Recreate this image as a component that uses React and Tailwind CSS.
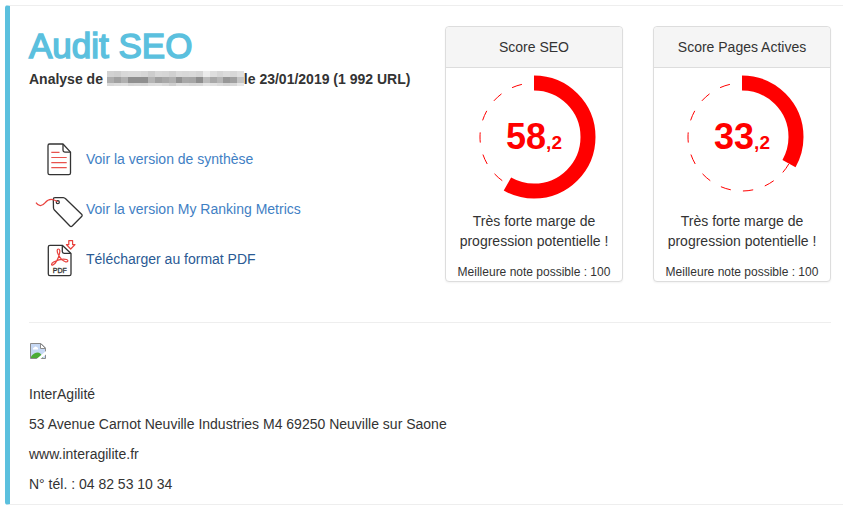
const scores = [
  { title: "Score SEO", value: 58.2 },
  { title: "Score Pages Actives", value: 33.2 },
];

const contact = [
  "InterAgilité",
  "53 Avenue Carnot Neuville Industries M4 69250 Neuville sur Saone",
  "www.interagilite.fr",
  "N° tél. : 04 82 53 10 34",
];

// grey levels of the masked site name, one array per row
const mask = [
  ["#d2d2d2", "#cfcfcf", "#d8d8d8", "#dadada", "#dadada", "#d6d6d6", "#cdcdcd", "#d8d8d8", "#d6d6d6", "#d0d0d0", "#dadada", "#d8d8d8", "#dadada", "#d6d6d6", "#ececec", "#dedede", "#d6d6d6", "#dcdcdc", "#d8d8d8", "#e0e0e0"],
  ["#aeaeae", "#a0a0a0", "#b0b0b0", "#8f8f8f", "#8f8f8f", "#8f8f8f", "#b4b4b4", "#a0a0a0", "#a8a8a8", "#b0b0b0", "#929292", "#a8a8a8", "#a6a6a6", "#8e8e8e", "#bcbcbc", "#a8a8a8", "#b6b6b6", "#979797", "#a0a0a0", "#c4c4c4"],
  ["#d8d8d8", "#dcdcdc", "#dedede", "#d4d4d4", "#d6d6d6", "#d4d4d4", "#dcdcdc", "#dedede", "#d8d8d8", "#cecece", "#dcdcdc", "#dadada", "#d6d6d6", "#d8d8d8", "#e4e4e4", "#e0e0e0", "#dadada", "#d4d4d4", "#d8d8d8", "#e6e6e6"],
];

function MaskedName() {
  return (
    <svg
      className="inline-block w-[137px] h-[15px] align-text-top"
      viewBox="0 0 140 15"
      preserveAspectRatio="none"
      shapeRendering="crispEdges"
      aria-hidden="true"
    >
      {mask.map((row, y) =>
        row.map((fill, x) => (
          <rect key={`${x}-${y}`} x={x * 7} y={y * 6} width="7" height={y === 2 ? 3 : 6} fill={fill} />
        ))
      )}
    </svg>
  );
}

function DocumentIcon() {
  return (
    <svg width="57" height="46" viewBox="0 2 57 46" fill="none" stroke="#333" strokeWidth="1.3" aria-hidden="true">
      <path d="M34 10H20.5Q19 10 19 11.7V39Q19 40.7 20.7 40.7H39.8Q41.5 40.7 41.5 39V18.1Z" strokeLinejoin="round" />
      <path d="M34 10V16.3Q34 18.1 35.8 18.1H41.5" />
      <path d="M22.3 18.3H30.5M22.3 23.5H37.7M22.3 28.7H37.7M22.3 33.6H37.7" stroke="#e8524e" strokeWidth="1.2" />
    </svg>
  );
}

function TagIcon() {
  return (
    <svg width="57" height="46" viewBox="0 2 57 46" fill="none" stroke="#333" strokeWidth="1.3" aria-hidden="true">
      <path
        d="M26 13.6L34.2 13.7Q35.6 13.8 36.6 14.8L52.6 30.3Q53.7 31.4 52.6 32.5L43.2 42Q42 43 40.9 42L25.4 26Q24.6 25.2 24.5 24L24.3 15.2Q24.3 13.6 26 13.6Z"
        strokeLinejoin="round"
      />
      <circle cx="28.8" cy="18.2" r="1.5" />
      <path d="M7 18.6C9.5 22.5 13 22.6 16 18.9C19.5 14.5 24 14.6 28.5 17.8" stroke="#e8413c" strokeWidth="1.2" />
    </svg>
  );
}

function PdfIcon() {
  return (
    <svg width="57" height="46" viewBox="0 2 57 46" fill="none" stroke="#333" strokeWidth="1.3" aria-hidden="true">
      <path d="M33.3 11.3H21Q19.3 11.3 19.3 13V40Q19.3 41.7 21 41.7H40.3Q42 41.7 42 40V19.4Z" strokeLinejoin="round" />
      <path d="M33.3 11.3V17.6Q33.3 19.4 35.1 19.4H42" />
      <g stroke="#e8413c" strokeWidth="1.2" strokeLinejoin="round">
        <path d="M39.8 6.6H43.6V10.6H46L41.7 15L37.4 10.6H39.8Z" fill="#fff" />
        <path d="M29.4 15C27.7 15 27.9 18 29.3 20.5C30.9 23.6 33.6 26.9 36.4 27.8C38.8 28.5 39.8 26.3 37.6 25.5C34.4 24.5 28.4 26 24.6 28C22 29.4 22 31.6 24 30.9C26.8 29.9 29.7 23.8 30.6 19.2C31 17 30.9 15 29.4 15Z" />
      </g>
      <text x="30.8" y="38.6" textAnchor="middle" fill="#333" stroke="#333" strokeWidth="0.3" fontSize="7">
        PDF
      </text>
    </svg>
  );
}

function BrokenImage() {
  return (
    <svg width="16" height="16" viewBox="0 0 16 16" className="block ml-px" role="img" aria-label="Logo">
      <path d="M.5 .5H11L15.5 5V15.5H.5Z" fill="#c6d8f4" />
      <path d="M3 6.5Q2.6 4.8 4.2 4.6Q5.2 2.8 7 4.2Q8.6 4.6 8 6.5Z" fill="#fff" />
      <path d="M1 15V13.5Q4 9.5 8 9.5Q11 9.8 13 15Z" fill="#4cab36" />
      <path d="M.5 15.5V.5H11L15.5 5V15.5Z" fill="none" stroke="#8b8b8b" />
      <path d="M10.5 .5V5.5H15.5Z" fill="#fff" stroke="#8b8b8b" />
      <path d="M6.5 16L16 8V11.5L10.5 16Z" fill="#fff" />
    </svg>
  );
}

function ScoreRing({ value }) {
  const [whole, decimal] = value.toFixed(1).split(".");
  return (
    <svg
      width="124"
      height="124"
      viewBox="-62 -62 124 124"
      className="block mx-auto"
      role="img"
      aria-label={`${whole},${decimal}`}
    >
      <g transform="rotate(-90)" fill="none" stroke="#f00">
        <circle r="54" pathLength="360" strokeDasharray="11 13" />
        <circle r="54" pathLength="100" strokeWidth="15" strokeDasharray={`${value} 100`} />
      </g>
      <text y="12" textAnchor="middle" fill="#f00" fontWeight="bold" fontSize="36">
        {whole}
        <tspan fontSize="19">,{decimal}</tspan>
      </text>
    </svg>
  );
}

function ScoreCard({ title, value }) {
  return (
    <section className="border border-[#ddd] rounded bg-white text-center shadow-xs">
      <h2 className="bg-[#f5f5f5] border-b border-[#ddd] rounded-t py-[10px]">{title}</h2>
      <div className="pt-[7px]">
        <ScoreRing value={value} />
        <p className="mt-3">
          Très forte marge de
          <br />
          progression potentielle !
        </p>
        <p className="mt-3 text-xs leading-[18px]">Meilleure note possible : 100</p>
      </div>
    </section>
  );
}

export default function App() {
  return (
    <div className="bg-white pt-[5px] pl-[5px] pb-[10px] text-[14px] leading-5 text-[#333] font-['Liberation_Sans',Arial,sans-serif]">
      <main className="border-y border-[#eee] border-l-[5px] border-l-[#5bc0de] rounded-l-[3px] pt-5 pr-3 pb-[10px] pl-[19px]">
        <div className="grid grid-cols-4 gap-[30px]">
          <div className="col-span-2">
            <h1 className="text-[35px] leading-10 text-[#5bc0de] [-webkit-text-stroke:1.5px]">Audit SEO</h1>
            <p className="mt-[3px] font-bold whitespace-nowrap">
              Analyse de <MaskedName />
              le 23/01/2019 (1 992 URL)
            </p>
            <nav className="mt-[47px] flex flex-col items-start gap-1">
              <a href="#synthese" className="flex items-center text-[#3f80c4] hover:text-[#2a5a94]">
                <DocumentIcon />
                Voir la version de synthèse
              </a>
              <a href="#ranking" className="flex items-center text-[#3f80c4] hover:text-[#2a5a94]">
                <TagIcon />
                Voir la version My Ranking Metrics
              </a>
              <a href="#pdf" className="flex items-center text-[#2a5a94]">
                <PdfIcon />
                Télécharger au format PDF
              </a>
            </nav>
          </div>
          {scores.map((score) => (
            <ScoreCard key={score.title} title={score.title} value={score.value} />
          ))}
        </div>
        <hr className="mt-10 mb-5 border-[#eee]" />
        <BrokenImage />
        <address className="mt-[25px] flex flex-col gap-[10px] not-italic">
          {contact.map((line) => (
            <p key={line}>{line}</p>
          ))}
        </address>
      </main>
    </div>
  );
}
